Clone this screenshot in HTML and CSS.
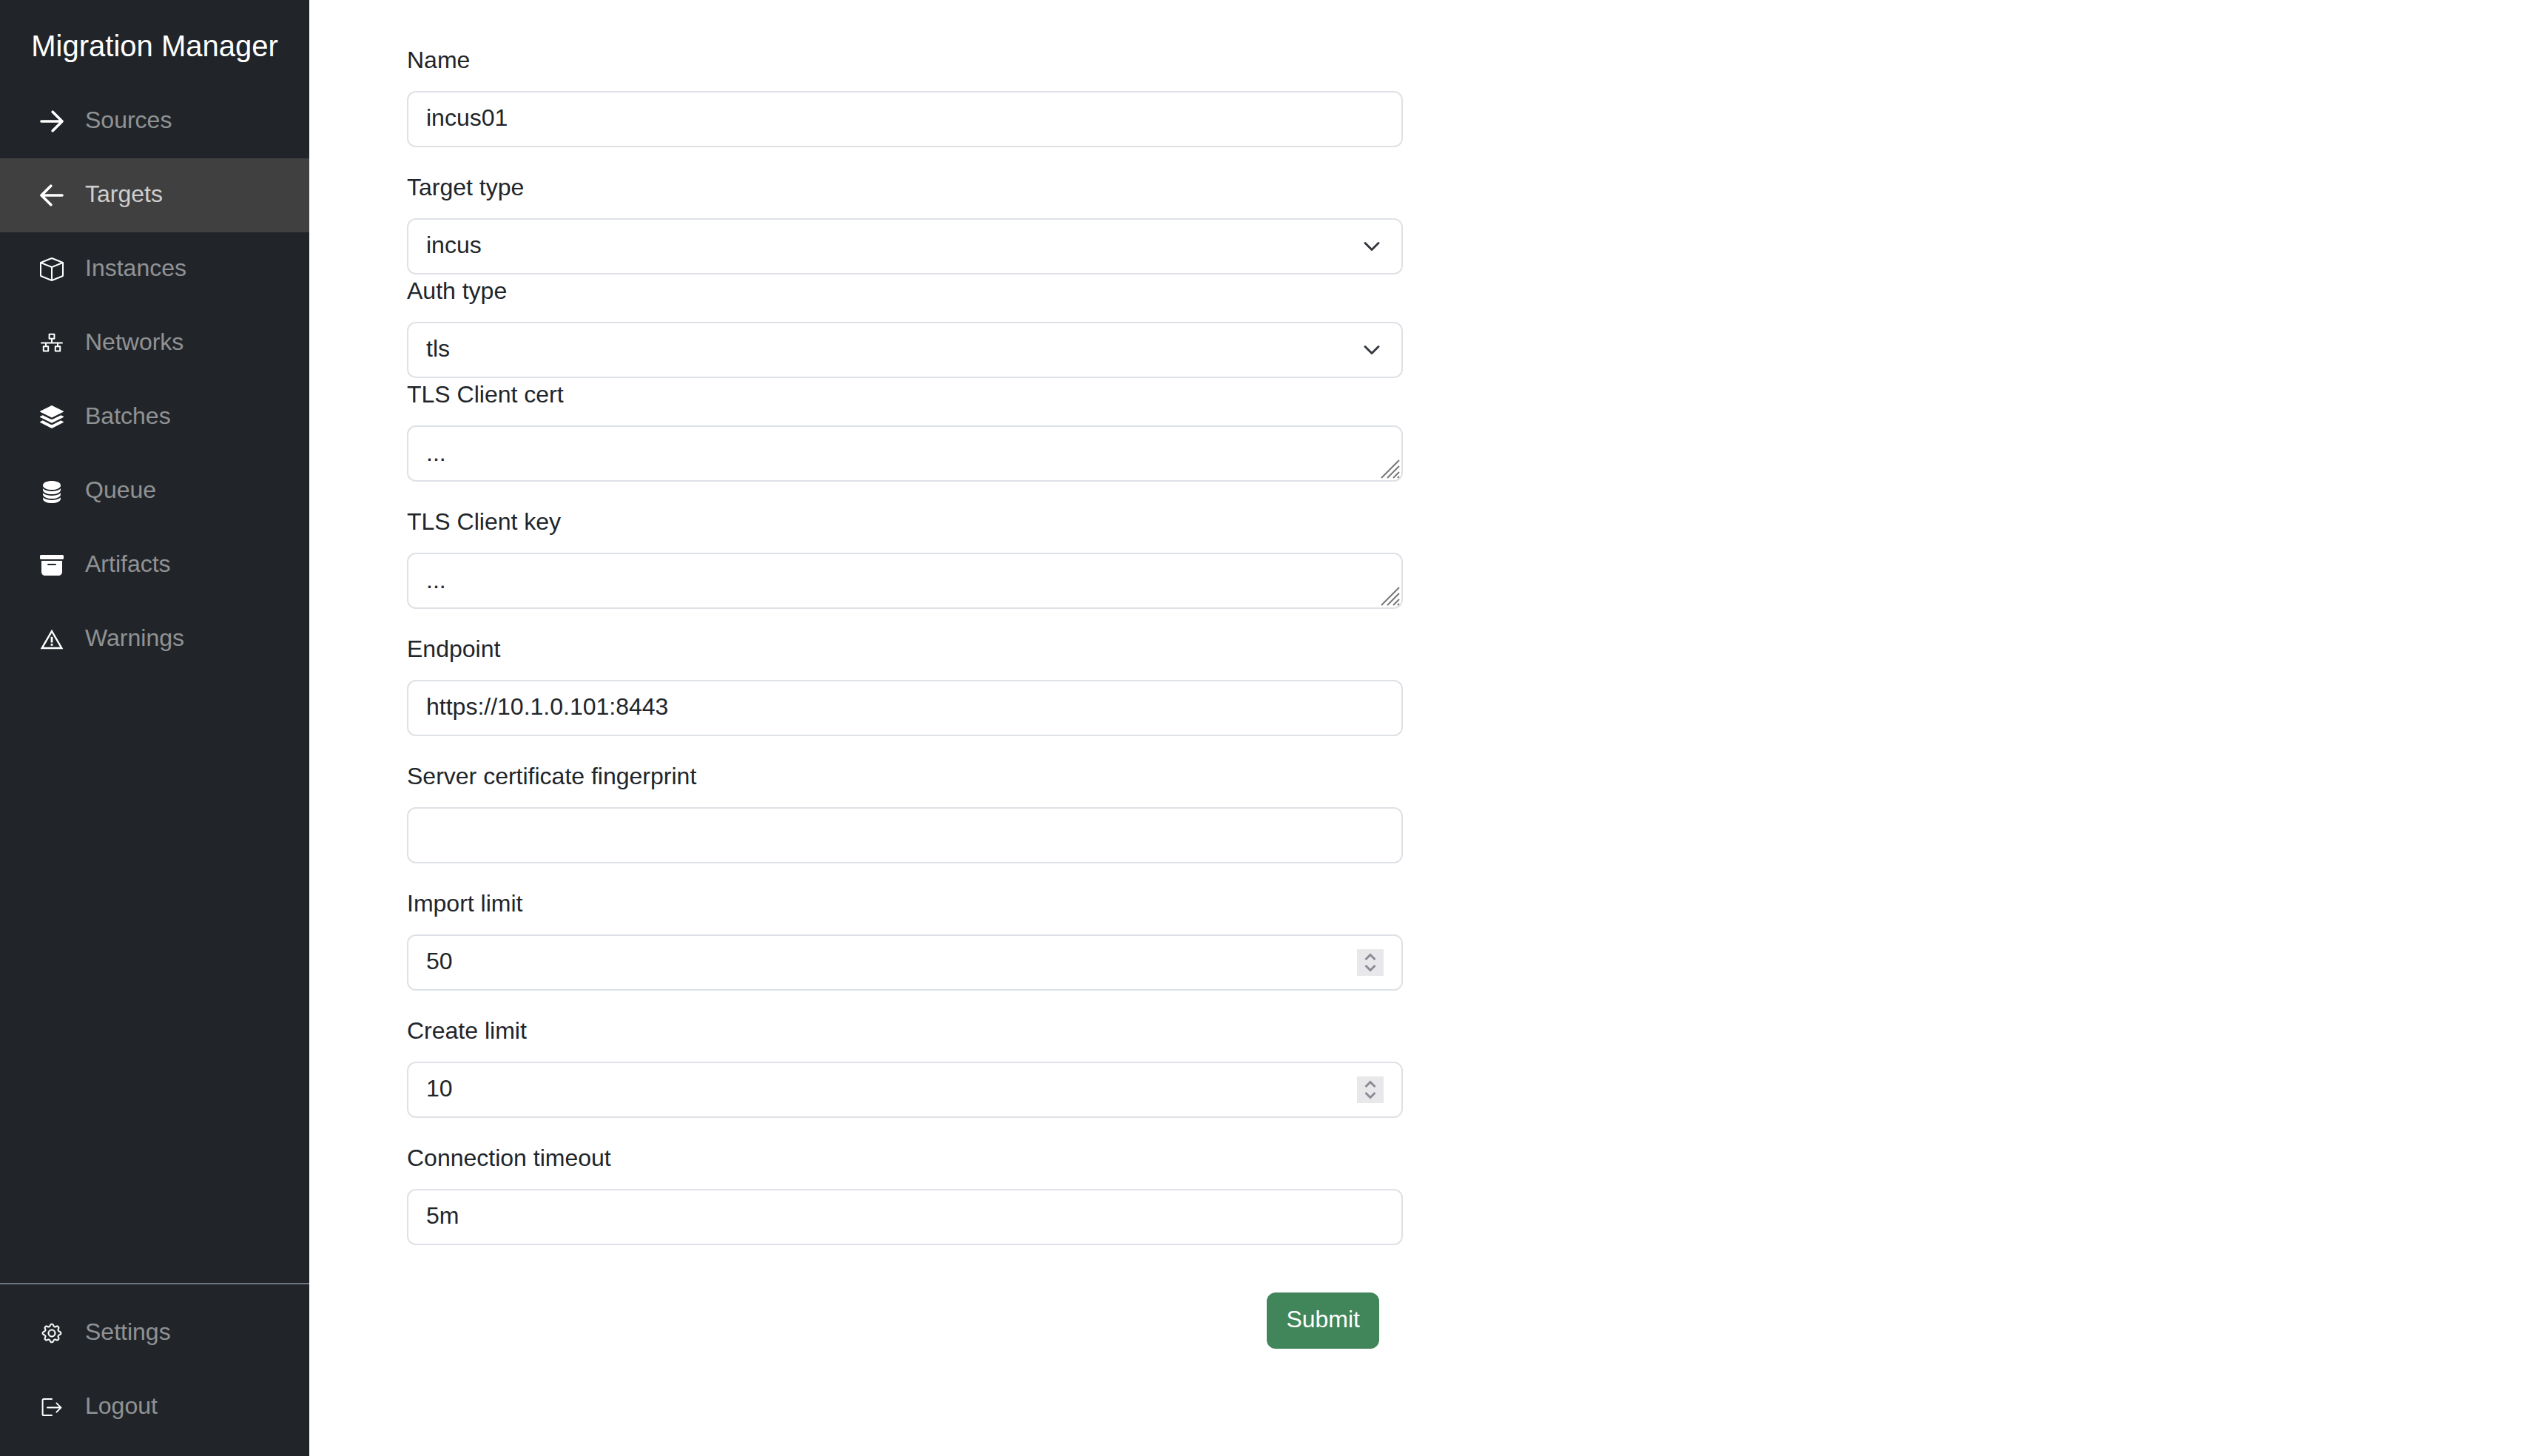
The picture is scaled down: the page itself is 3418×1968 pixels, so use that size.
FILE: index.html
```html
<!DOCTYPE html>
<html lang="en">
<head>
    <meta charset="UTF-8">
    <meta name="viewport" content="width=device-width, initial-scale=1.0">
    <title>Migration Manager</title>
    <link rel="stylesheet" href="styles.css">
</head>
<body>
    <aside class="sidebar">
        <div class="brand">Migration Manager</div>
        <nav class="nav">
            <a class="nav-link" href="#">
                <svg class="icon" viewBox="0 0 16 16"><path class="line" d="M1 8H15M8.6 1.6 15 8l-6.4 6.4"/></svg>
                Sources
            </a>
            <a class="nav-link active" href="#">
                <svg class="icon" viewBox="0 0 16 16"><path class="line" d="M15 8H1M7.4 1.6 1 8l6.400 6.400"/></svg>
                Targets
            </a>
            <a class="nav-link" href="#">
                <svg class="icon" viewBox="0 0 16 16"><path d="M8.186 1.113a.5.5 0 0 0-.372 0L1.846 3.5 8 5.961 14.154 3.5zM15 4.239l-6.5 2.6v7.922l6.5-2.6V4.24zM7.5 14.762V6.838L1 4.239v7.925zM7.443.184a1.5 1.5 0 0 1 1.114 0l7.129 2.852A.5.5 0 0 1 16 3.5v8.662a1 1 0 0 1-.629.928l-7.185 2.874a.5.5 0 0 1-.372 0L.63 13.09a1 1 0 0 1-.63-.928V3.5a.5.5 0 0 1 .314-.464z"/></svg>
                Instances
            </a>
            <a class="nav-link" href="#">
                <svg class="icon" viewBox="0 0 16 16"><path class="thin" d="M6.3 1.900h3.400v3H6.300zM8 4.900v2.800M1 7.700h14M4 7.700v2.400M12 7.700v2.400M2.400 10.100h3.200v3.200H2.400zM10.400 10.100h3.200v3.200h-3.200z"/></svg>
                Networks
            </a>
            <a class="nav-link" href="#">
                <svg class="icon" viewBox="0 0 16 16"><path d="m14.12 10.163 1.715.858c.22.11.22.424 0 .534L8.267 15.34a.6.6 0 0 1-.534 0L.165 11.555a.299.299 0 0 1 0-.534l1.716-.858 5.317 2.659c.505.252 1.1.252 1.604 0l5.317-2.66zM7.733.063a.6.6 0 0 1 .534 0l7.568 3.784a.3.3 0 0 1 0 .535L8.267 8.165a.6.6 0 0 1-.534 0L.165 4.382a.299.299 0 0 1 0-.535z"/><path d="m14.12 6.576 1.715.858c.22.11.22.424 0 .534l-7.568 3.784a.6.6 0 0 1-.534 0L.165 7.968a.299.299 0 0 1 0-.534l1.716-.858 5.317 2.659c.505.252 1.1.252 1.604 0z"/></svg>
                Batches
            </a>
            <a class="nav-link" href="#">
                <svg class="icon" viewBox="0 0 16 16"><path d="M3.904 1.777C4.978 1.289 6.427 1 8 1s3.022.289 4.096.777C13.125 2.245 14 2.993 14 4s-.875 1.755-1.904 2.223C11.022 6.711 9.573 7 8 7s-3.022-.289-4.096-.777C2.875 5.755 2 5.007 2 4s.875-1.755 1.904-2.223"/><path d="M2 6.161V7c0 1.007.875 1.755 1.904 2.223C4.978 9.71 6.427 10 8 10s3.022-.289 4.096-.777C13.125 8.755 14 8.007 14 7v-.839c-.457.432-1.004.751-1.49.972C11.278 7.693 9.682 8 8 8s-3.278-.307-4.51-.867c-.486-.22-1.033-.54-1.49-.972"/><path d="M2 9.161V10c0 1.007.875 1.755 1.904 2.223C4.978 12.711 6.427 13 8 13s3.022-.289 4.096-.777C13.125 11.755 14 11.007 14 10v-.839c-.457.432-1.004.751-1.49.972-1.232.56-2.828.867-4.51.867s-3.278-.307-4.51-.867c-.486-.22-1.033-.54-1.49-.972"/><path d="M2 12.161V13c0 1.007.875 1.755 1.904 2.223C4.978 15.711 6.427 16 8 16s3.022-.289 4.096-.777C13.125 14.755 14 14.007 14 13v-.839c-.457.432-1.004.751-1.49.972-1.232.56-2.828.867-4.51.867s-3.278-.307-4.51-.867c-.486-.22-1.033-.54-1.49-.972"/></svg>
                Queue
            </a>
            <a class="nav-link" href="#">
                <svg class="icon" viewBox="0 0 16 16"><path d="M12.643 15C13.979 15 15 13.845 15 12.5V5H1v7.5C1 13.845 2.021 15 3.357 15zM5.5 7h5a.5.5 0 0 1 0 1h-5a.5.5 0 0 1 0-1M.8 1a.8.8 0 0 0-.8.8v1.4a.8.8 0 0 0 .8.8h14.4a.8.8 0 0 0 .8-.8V1.8a.8.8 0 0 0-.8-.8z"/></svg>
                Artifacts
            </a>
            <a class="nav-link" href="#">
                <svg class="icon" viewBox="0 0 16 16"><path fill-rule="evenodd" d="M8 1.400 15.700 14.600H.3zM8 3.800 2.400 13.400h11.200z"/><path d="M7.300 6.400h1.400v3.800H7.300zM7.300 11h1.400v1.400H7.300z"/></svg>
                Warnings
            </a>
        </nav>
        <div class="nav-bottom">
            <a class="nav-link" href="#">
                <svg class="icon" viewBox="0 0 16 16"><g class="gear"><path d="M8 4.754a3.246 3.246 0 1 0 0 6.492 3.246 3.246 0 0 0 0-6.492M5.754 8a2.246 2.246 0 1 1 4.492 0 2.246 2.246 0 0 1-4.492 0"/><path d="M9.796 1.343c-.527-1.79-3.065-1.79-3.592 0l-.094.319a.873.873 0 0 1-1.255.52l-.292-.16c-1.64-.892-3.433.902-2.54 2.541l.159.292a.873.873 0 0 1-.52 1.255l-.319.094c-1.79.527-1.79 3.065 0 3.592l.319.094a.873.873 0 0 1 .52 1.255l-.16.292c-.892 1.64.901 3.434 2.541 2.54l.292-.159a.873.873 0 0 1 1.255.52l.094.319c.527 1.79 3.065 1.79 3.592 0l.094-.319a.873.873 0 0 1 1.255-.52l.292.16c1.64.893 3.434-.902 2.54-2.541l-.159-.292a.873.873 0 0 1 .52-1.255l.319-.094c1.79-.527 1.79-3.065 0-3.592l-.319-.094a.873.873 0 0 1-.52-1.255l.16-.292c.893-1.64-.902-3.433-2.541-2.54l-.292.159a.873.873 0 0 1-1.255-.52zm-2.633.283c.246-.835 1.428-.835 1.674 0l.094.319a1.873 1.873 0 0 0 2.693 1.115l.291-.16c.764-.415 1.6.42 1.184 1.185l-.159.292a1.873 1.873 0 0 0 1.116 2.692l.318.094c.835.246.835 1.428 0 1.674l-.319.094a1.873 1.873 0 0 0-1.115 2.693l.16.291c.415.764-.42 1.6-1.185 1.184l-.291-.159a1.873 1.873 0 0 0-2.693 1.116l-.094.318c-.246.835-1.428.835-1.674 0l-.094-.319a1.873 1.873 0 0 0-2.692-1.115l-.292.16c-.764.415-1.6-.42-1.184-1.185l.159-.291A1.873 1.873 0 0 0 1.945 8.93l-.319-.094c-.835-.246-.835-1.428 0-1.674l.319-.094A1.873 1.873 0 0 0 3.06 4.377l-.16-.292c-.415-.764.42-1.6 1.185-1.184l.292.159a1.873 1.873 0 0 0 2.692-1.115z"/></g></svg>
                Settings
            </a>
            <a class="nav-link" href="#">
                <svg class="icon" viewBox="0 0 16 16"><path class="thin" d="M8 2.500H2.600a.8.8 0 0 0-.8.8v9.400a.8.8 0 0 0 .8.8H8"/><path class="thin" d="M5 8.300h9.200M11.200 5.300l3 3-3 3"/></svg>
                Logout
            </a>
        </div>
    </aside>

    <main class="content">
        <form class="target-form">
            <div class="field">
                <label for="name">Name</label>
                <input id="name" type="text" value="incus01">
            </div>
            <div class="field tight">
                <label for="target-type">Target type</label>
                <select id="target-type"><option>incus</option></select>
            </div>
            <div class="field tight">
                <label for="auth-type">Auth type</label>
                <select id="auth-type"><option>tls</option></select>
            </div>
            <div class="field">
                <label for="client-cert">TLS Client cert</label>
                <div class="control-wrap">
                    <textarea id="client-cert" rows="1">...</textarea>
                    <svg class="grip" viewBox="0 0 26 26"><path d="M1 25 25 1M9 25 25 9M17 25l8-8M23 25l2-2"/></svg>
                </div>
            </div>
            <div class="field">
                <label for="client-key">TLS Client key</label>
                <div class="control-wrap">
                    <textarea id="client-key" rows="1">...</textarea>
                    <svg class="grip" viewBox="0 0 26 26"><path d="M1 25 25 1M9 25 25 9M17 25l8-8M23 25l2-2"/></svg>
                </div>
            </div>
            <div class="field">
                <label for="endpoint">Endpoint</label>
                <input id="endpoint" type="text" value="https://10.1.0.101:8443">
            </div>
            <div class="field">
                <label for="fingerprint">Server certificate fingerprint</label>
                <input id="fingerprint" type="text">
            </div>
            <div class="field">
                <label for="import-limit">Import limit</label>
                <div class="control-wrap">
                    <input id="import-limit" type="number" value="50">
                    <svg class="spinner" viewBox="0 0 36 36"><path d="m11.5 14 6.500-6.500 6.500 6.500M11.5 22l6.500 6.500 6.500-6.500"/></svg>
                </div>
            </div>
            <div class="field">
                <label for="create-limit">Create limit</label>
                <div class="control-wrap">
                    <input id="create-limit" type="number" value="10">
                    <svg class="spinner" viewBox="0 0 36 36"><path d="m11.5 14 6.500-6.500 6.500 6.500M11.5 22l6.500 6.500 6.500-6.500"/></svg>
                </div>
            </div>
            <div class="field">
                <label for="timeout">Connection timeout</label>
                <input id="timeout" type="text" value="5m">
            </div>
            <div class="actions">
                <button class="submit" type="button">Submit</button>
            </div>
        </form>
    </main>
</body>
</html>
```

FILE: styles.css
```css
*{
    margin: 0;
    padding: 0;
    box-sizing: border-box;
    font-family: "Liberation Sans", Arial, sans-serif;
}
body{
    display: flex;
    min-height: 100vh;
    background: #fff;
    color: #212529;
    font-size: 32px;
    line-height: 48px;
}

/* sidebar */
.sidebar{
    width: 418px;
    flex-shrink: 0;
    display: flex;
    flex-direction: column;
    background: #212529;
}
.brand{
    height: 114px;
    display: flex;
    align-items: center;
    justify-content: center;
    padding-top: 10px;
    color: #fff;
    font-size: 40px;
}
.nav{
    flex: 1;
}
.nav-link{
    height: 100px;
    display: flex;
    align-items: center;
    gap: 29px;
    padding: 0 0 4px 54px;
    color: rgba(255, 255, 255, .5);
    text-decoration: none;
}
.nav-link.active{
    background: #404040;
    color: rgba(255, 255, 255, .75);
}
.nav-bottom{
    border-top: 2px solid #6c757d;
    padding: 16px 0;
}
.icon{
    width: 32px;
    height: 32px;
    margin-top: 4px;
    flex-shrink: 0;
    fill: #fff;
}
.icon .line{
    fill: none;
    stroke: #fff;
    stroke-width: 1.8;
    stroke-linecap: round;
    stroke-linejoin: round;
}
.icon .thin{
    fill: none;
    stroke: #fff;
    stroke-width: 1;
    stroke-linecap: round;
    stroke-linejoin: round;
}
.gear{
    transform: scale(.82);
    transform-origin: 8px 8px;
    stroke: #fff;
    stroke-width: .3;
}

/* form */
.content{
    flex: 1;
    padding: 59px 0 0 132px;
}
.target-form{
    width: 1346px;
}
.field{
    margin-bottom: 32px;
}
.field.tight{
    margin-bottom: 0;
}
.field label{
    display: block;
    line-height: 44px;
    margin-bottom: 20px;
}
.field input,
.field select,
.field textarea{
    display: block;
    width: 100%;
    height: 76px;
    padding: 10px 24px 14px;
    border: 2px solid #dee2e6;
    border-radius: 12px;
    outline: 0;
    background-color: #fff;
    color: #212529;
    font-size: 32px;
    line-height: 48px;
}
.field select{
    appearance: none;
    padding-right: 72px;
    background-image: url("data:image/svg+xml,%3csvg xmlns='http://www.w3.org/2000/svg' viewBox='0 0 16 16'%3e%3cpath fill='none' stroke='%23343a40' stroke-linecap='round' stroke-linejoin='round' stroke-width='2' d='m2 5 6 6 6-6'/%3e%3c/svg%3e");
    background-repeat: no-repeat;
    background-position: right 24px center;
    background-size: 32px 24px;
}
.field textarea{
    padding: 11px 24px 13px;
    resize: none;
    overflow: hidden;
}
.field input[type=number]{
    appearance: textfield;
}
.field input[type=number]::-webkit-inner-spin-button{
    appearance: none;
}
.control-wrap{
    position: relative;
}
.grip{
    position: absolute;
    right: 4px;
    bottom: 4px;
    width: 26px;
    height: 26px;
    fill: none;
    stroke: #777;
    stroke-width: 2;
}
.spinner{
    position: absolute;
    right: 26px;
    top: 20px;
    width: 36px;
    height: 36px;
    background: #e8e8ea;
    fill: none;
    stroke: #8b8b97;
    stroke-width: 3;
}
.actions{
    display: flex;
    justify-content: flex-end;
    padding: 32px 32px 0 0;
}
.submit{
    padding: 10px 24px 14px;
    border: 2px solid #41855a;
    border-radius: 12px;
    background: #41855a;
    color: #fff;
    font-size: 32px;
    line-height: 48px;
}
```
